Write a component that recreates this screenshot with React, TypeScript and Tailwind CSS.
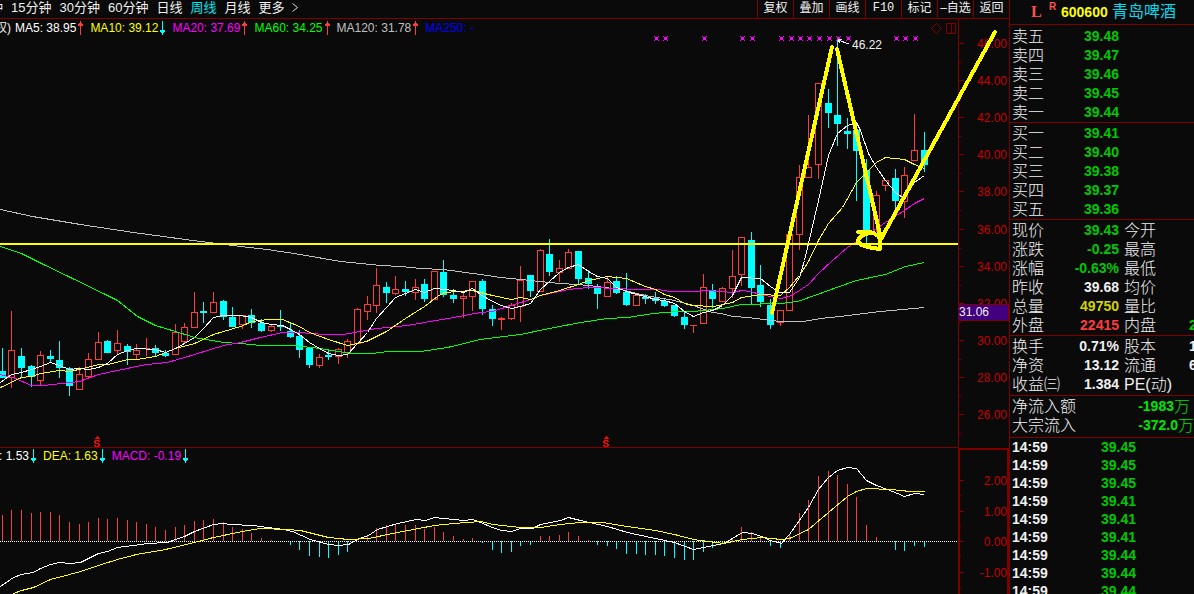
import clsx from 'clsx'

const UP = '#ff3c3c'
const DOWN = '#00ffff'
const AXIS = '#800000'
const LABEL = '#c80000'

const PERIODS = ['15分钟', '30分钟', '60分钟', '日线', '周线', '月线', '更多']
const TOOLS = ['复权', '叠加', '画线', 'F10', '标记', '–自选', '返回']

const MA_LEGEND = [
  { text: 'MA5: 38.95', color: 'text-white', up: true },
  { text: 'MA10: 39.12', color: 'text-[#ffff00]', up: false },
  { text: 'MA20: 37.69', color: 'text-[#ff00ff]', up: true },
  { text: 'MA60: 34.25', color: 'text-[#00ff00]', up: true },
  { text: 'MA120: 31.78', color: 'text-[#c0c0c0]', up: true },
]

// high, body top, body bottom, low, rising (1) or falling (0)
const CANDLES = [
  [348, 371, 378, 378, 0], [311, 350, 378, 388, 1], [348, 356, 368, 378, 0], [365, 366, 377, 387, 0],
  [351, 355, 381, 386, 1], [350, 356, 359, 362, 0], [341, 360, 368, 378, 0], [367, 368, 386, 396, 0],
  [367, 374, 390, 390, 1], [353, 359, 377, 378, 1], [332, 342, 360, 360, 1], [340, 341, 353, 353, 0],
  [330, 343, 351, 354, 1], [344, 346, 352, 365, 0], [344, 350, 355, 359, 1], [338, 348, 349, 356, 1],
  [345, 348, 353, 357, 0], [350, 353, 356, 357, 0], [324, 332, 355, 355, 1], [323, 327, 342, 343, 1],
  [292, 312, 328, 328, 1], [302, 311, 313, 323, 0], [292, 302, 313, 313, 1], [300, 301, 317, 320, 0],
  [307, 317, 327, 327, 0], [315, 315, 325, 329, 1], [309, 315, 323, 328, 0], [319, 323, 331, 332, 0],
  [325, 326, 331, 332, 1], [310, 325, 327, 331, 0], [323, 331, 337, 338, 0], [330, 336, 350, 358, 0],
  [347, 348, 365, 368, 0], [354, 357, 366, 368, 1], [349, 355, 357, 360, 0], [348, 349, 357, 364, 1],
  [339, 341, 353, 358, 1], [308, 309, 344, 344, 1], [296, 304, 312, 320, 1], [268, 285, 306, 313, 1],
  [282, 287, 293, 303, 0], [276, 289, 294, 295, 1], [281, 289, 292, 296, 0], [279, 287, 293, 300, 1],
  [279, 284, 299, 302, 0], [271, 271, 300, 300, 1], [260, 272, 295, 297, 0], [289, 295, 299, 303, 0],
  [293, 296, 299, 318, 1], [281, 281, 297, 311, 1], [279, 281, 309, 315, 0], [305, 309, 319, 326, 0],
  [317, 318, 320, 330, 1], [303, 305, 319, 320, 1], [266, 280, 307, 322, 1], [275, 275, 291, 297, 0],
  [249, 250, 292, 292, 1], [239, 254, 272, 276, 0], [260, 268, 273, 282, 1], [249, 252, 269, 269, 1],
  [251, 251, 279, 284, 0], [270, 278, 284, 289, 0], [284, 286, 294, 309, 0], [277, 282, 297, 297, 1],
  [276, 281, 293, 294, 0], [273, 292, 305, 306, 0], [295, 295, 306, 306, 1], [294, 297, 299, 304, 0],
  [292, 298, 301, 304, 0], [299, 301, 306, 307, 0], [305, 305, 316, 317, 0], [311, 317, 325, 329, 0],
  [325, 325, 326, 333, 1], [274, 287, 324, 324, 1], [284, 290, 299, 308, 0], [287, 288, 302, 302, 1],
  [250, 276, 289, 298, 1], [237, 237, 275, 286, 1], [232, 240, 288, 304, 0], [265, 285, 302, 307, 0],
  [299, 305, 325, 329, 0], [310, 310, 323, 326, 1], [234, 234, 311, 311, 1], [165, 177, 235, 250, 1],
  [115, 167, 178, 178, 1], [83, 83, 165, 179, 1], [89, 103, 113, 128, 0], [40, 115, 124, 146, 0],
  [118, 131, 134, 149, 0], [128, 130, 151, 201, 0], [159, 170, 235, 243, 0], [191, 195, 230, 232, 1],
  [180, 180, 186, 191, 1], [169, 178, 201, 210, 0], [167, 175, 202, 218, 1], [114, 150, 161, 161, 1],
  [132, 150, 165, 172, 0],
]

const MACD_ZERO = 541
const MACD_BARS = [
  515, 510, 510, 513, 512, 512, 515, 522, 524, 522, 518, 519, 518, 520, 522, 524, 527, 530, 527, 525,
  521, 520, 519, 522, 527, 529, 533, 538, 540, 541, 545, 550, 556, 557, 558, 555, 552, 541, 536, 528,
  525, 524, 525, 525, 529, 527, 532, 536, 539, 538, 543, 550, 553, 552, 546, 545, 536, 536, 535, 532,
  536, 540, 545, 546, 549, 554, 554, 555, 555, 556, 558, 560, 560, 552, 548, 543, 539, 527, 532, 537,
  546, 548, 534, 513, 500, 476, 471, 475, 484, 497, 525, 537, 541, 550, 551, 546, 547,
]

const MA_LINES = [
  {
    color: '#c0c0c0',
    points:
      '0,209 32,216 80,224 133,232 200,241 240,246 267,249 300,254 340,261 380,265 400,266 420,268 443,269 480,274 500,277 530,280 559,283 578,284 597,286 620,289 645,295 674,300 693,305 712,312 720,313 733,316 747,317 780,321 803,321 820,318 840,316 880,311 924,307',
  },
  {
    color: '#00ff00',
    points:
      '0,246 21,253 41,263 70,277 107,295 117,300 137,316 155,325 175,331 194,337 223,342 240,343 260,345 293,345 320,348 337,351 353,353 372,353 387,351 420,351 447,347 480,339 520,334 549,328 580,322 607,318 627,317 653,313 677,311 693,311 722,308 741,304 780,303 797,301 817,294 839,286 856,280 885,274 905,266 924,262',
  },
  {
    color: '#ff00ff',
    points:
      '0,374 15,378 31,385 43,385 79,381 98,374 117,370 146,364 167,362 184,357 194,354 223,345 240,342 260,337 282,332 299,332 323,334 343,334 376,328 407,325 424,322 453,317 480,312 492,311 511,305 530,299 540,295 568,289 588,287 620,288 630,289 657,289 670,291 692,291 707,290 720,291 733,292 741,290 750,291 760,294 780,298 789,296 799,290 808,284 817,274 832,260 847,247 856,241 872,231 885,222 904,210 914,203 924,198',
  },
  {
    color: '#ffff00',
    points:
      '0,387 21,377 31,376 40,373 59,370 69,371 83,368 98,364 108,364 127,359 136,359 155,356 175,348 194,343 213,334 240,326 252,321 268,319 282,319 299,326 309,332 328,339 347,345 366,341 376,336 386,331 405,318 424,306 437,296 444,292 472,290 480,292 492,295 511,299 520,297 530,299 540,295 559,290 578,284 588,280 607,276 626,278 645,286 655,289 664,294 674,297 684,303 692,305 713,306 732,302 741,297 760,294 780,295 789,287 799,275 808,261 818,240 828,223 842,207 856,182 868,170 876,162 885,157 904,159 914,164 924,168',
  },
  {
    color: '#ffffff',
    points:
      '0,382 11,374 21,372 31,369 40,366 50,362 59,365 69,369 79,368 88,369 98,367 107,363 117,354 127,350 136,348 155,349 165,352 175,348 184,343 194,337 203,328 213,317 222,315 240,315 251,317 261,322 271,324 282,325 290,329 299,334 309,342 319,348 328,353 338,355 347,354 357,343 367,332 376,318 386,307 395,297 405,293 415,289 424,292 434,288 444,289 453,290 463,292 472,288 480,294 492,301 501,305 511,308 520,306 530,303 540,289 549,281 559,272 568,267 578,264 588,271 597,276 607,278 616,287 626,291 636,294 645,296 655,299 664,300 674,303 684,311 693,316 703,312 712,310 722,305 732,295 741,277 760,278 770,286 779,292 789,292 799,277 804,260 818,200 828,155 837,133 847,125 856,122 860,130 868,153 876,167 885,180 895,192 902,197 914,182 924,175',
  },
]

const DIF =
  '0,586 13,577 21,574 33,572 40,568 50,564 59,562 69,563 80,562 88,558 98,553 107,551 117,547 133,545 147,543 167,542 175,539 184,536 194,531 213,524 223,523 230,524 253,525 267,527 283,529 292,531 310,539 328,544 338,545 348,544 357,539 368,535 377,529 397,523 416,519 425,520 434,517 463,520 472,519 480,522 492,527 501,530 511,531 520,528 532,528 540,524 550,522 560,520 568,517 580,520 607,526 627,532 636,534 674,542 693,549 703,547 723,543 732,538 742,532 752,533 761,536 770,540 781,543 789,534 808,507 818,489 828,477 837,470 847,467 856,468 866,480 876,485 887,489 897,493 904,496 914,493 924,494'
const DEA =
  '8,596 13,593 21,590 33,587 50,579 69,574 80,571 98,565 117,559 136,554 165,549 194,542 213,537 242,531 260,528 287,529 300,530 328,537 348,539 368,538 397,532 434,525 453,523 480,521 493,524 520,527 540,527 560,524 580,522 602,522 627,526 655,530 674,534 693,539 723,543 742,539 761,537 781,539 789,538 808,529 828,512 847,496 856,491 866,488 890,489 910,491 924,491'

const CROSSES = [656, 665, 704, 742, 752, 781, 791, 800, 809, 819, 829, 838, 848, 896, 905, 915]
const PRICE_LABELS = ['46.00', '44.00', '42.00', '40.00', '38.00', '36.00', '34.00', '32.00', '30.00', '28.00', '26.00']
const MACD_LABELS = ['2.00', '1.00', '0.00', '-1.00']

const SELLS = [['卖五', '39.48'], ['卖四', '39.47'], ['卖三', '39.46'], ['卖二', '39.45'], ['卖一', '39.44']]
const BUYS = [['买一', '39.41'], ['买二', '39.40'], ['买三', '39.38'], ['买四', '39.37'], ['买五', '39.36']]

const GREEN = 'text-[#00c800]'
const LIGHT = 'text-[#f0f0f0]'

const QUOTE = [
  ['现价', '39.43', GREEN, '今开', '', GREEN],
  ['涨跌', '-0.25', GREEN, '最高', '', GREEN],
  ['涨幅', '-0.63%', GREEN, '最低', '', GREEN],
  ['昨收', '39.68', LIGHT, '均价', '', GREEN],
  ['总量', '49750', 'text-[#d2d200]', '量比', '', LIGHT],
  ['外盘', '22415', 'text-[#ff3c3c]', '内盘', '2', GREEN],
]
const BASICS = [
  ['换手', '0.71%', LIGHT, '股本', '1', LIGHT],
  ['净资', '13.12', LIGHT, '流通', '6', LIGHT],
  ['收益㈢', '1.384', LIGHT, 'PE(动)', '', LIGHT],
]
const TICKS = ['39.45', '39.45', '39.45', '39.41', '39.41', '39.41', '39.44', '39.44', '39.44']

const barX = (i: number) => Math.floor(2.3 + 9.602 * i)

function Arrow({ up }: { up: boolean }) {
  return (
    <svg width="5" height="14" viewBox="0 0 5 14" shapeRendering="crispEdges" className="shrink-0">
      {up ? (
        <path d="M2 0h1v2h1v1h1v2H3v9H2V5H0V3h1V2h1z" fill={UP} />
      ) : (
        <path d="M2 0h1v9h2v2H4v1H3v2H2v-2H1v-1H0V9h2z" fill={DOWN} />
      )}
    </svg>
  )
}

function Candle({ index, data }: { index: number; data: number[] }) {
  const [high, top, bottom, low, rising] = data
  const x = barX(index)
  const color = rising ? UP : DOWN
  return (
    <g>
      {top > high && <rect x={x} y={high} width="1" height={top - high} fill={color} />}
      {low > bottom && <rect x={x} y={bottom} width="1" height={low - bottom} fill={color} />}
      {rising && bottom - top > 2 ? (
        <rect x={x - 2.5} y={top + 0.5} width="6" height={bottom - top - 1} fill="none" stroke={color} />
      ) : (
        <rect x={x - 3} y={top} width="7" height={bottom - top} fill={color} />
      )}
    </g>
  )
}

function DividendMark({ x }: { x: number }) {
  return (
    <g fill="#ff0000" transform={`translate(${x - 3} 436)`}>
      <path d="M3 0h1v1h1v1h-3v-1h1zM1 2h5v1h-5z" />
      <path d="M1 4h4v1h-4zM0 5h2v2h-2zM4 5h2v1h-2zM1 7h4v1h-4zM4 8h2v2h-2zM0 9h2v1h-2zM1 10h4v1h-4z" />
    </g>
  )
}

function PriceChart() {
  return (
    <svg viewBox="0 19 1009 429" className="block h-auto w-full" shapeRendering="crispEdges">
      {CANDLES.map((data, i) => (
        <Candle key={i} index={i} data={data} />
      ))}
      <g fill="none">
        {MA_LINES.map(line => (
          <polyline key={line.color} points={line.points} stroke={line.color} transform="translate(0.5 0.5)" />
        ))}
      </g>
      {CROSSES.map(x => (
        <path
          key={x}
          d={`M${x - 2} 36h1v1h-1zM${x + 2} 36h1v1h-1zM${x - 1} 37h3v3h-3zM${x - 2} 40h1v1h-1zM${x + 2} 40h1v1h-1z`}
          fill="#ff00ff"
        />
      ))}
      <DividendMark x={97} />
      <DividendMark x={606} />

      {/* Price axis */}
      <path d="M958.5 19V447M0 447.5H958" stroke={AXIS} fill="none" />
      {PRICE_LABELS.map((label, i) => {
        const y = Math.round(43 + 37.1 * i)
        return (
          <g key={label}>
            <path d={`M959 ${y + 0.5}h5M959 ${y + 19.5}h2`} stroke={AXIS} />
            <text x="1007" y={y + 5} fontSize="12" textAnchor="end" fill={LABEL}>{label}</text>
          </g>
        )
      })}
      <rect x="958.5" y="304.5" width="50" height="16" fill="#400080" stroke={AXIS} />
      <text x="959" y="316" fontSize="12" fill="#f0f0f0">31.06</text>

      {/* Corner controls */}
      <path d="M936.5 23.5l5 5-5 5-5-5zM946.5 23.5h9v10h-9zM951.5 23.5v10" fill="none" stroke={AXIS} />

      {/* Peak label */}
      <path d="M838 40l11 4M838 40l4-1M838 40l2 3" stroke="#f0f0f0" fill="none" />
      <text x="852" y="49" fontSize="12" fill="#f0f0f0">46.22</text>

      {/* Hand drawn trend lines */}
      <rect x="0" y="243" width="958" height="2" fill="#ffff00" />
      <g fill="none" stroke="#ffff00" strokeLinecap="round" strokeLinejoin="round">
        <path d="M772 313L832 47M837 49L881 239L995 32" strokeWidth="4" />
        <path
          d="M858 232C866 231 872 232 875 234C880 236 881 242 880 249C872 248 862 247 858 242C858 237 864 234 870 233"
          strokeWidth="4"
        />
      </g>
    </svg>
  )
}

function MacdChart() {
  return (
    <svg viewBox="0 448 1009 146" className="block h-auto w-full" shapeRendering="crispEdges">
      {MACD_BARS.map((y, i) => (
        <rect
          key={i}
          x={barX(i)}
          y={Math.min(y, MACD_ZERO)}
          width="1"
          height={Math.abs(y - MACD_ZERO)}
          fill={y < MACD_ZERO ? UP : DOWN}
        />
      ))}
      <path d="M0 541.5H958" stroke="#ffffff" strokeDasharray="1 1" />
      <g fill="none" transform="translate(0.5 0.5)">
        <polyline points={DIF} stroke="#ffffff" />
        <polyline points={DEA} stroke="#ffff00" />
      </g>
      <path d="M959 600V449H1008V600" fill="none" stroke={AXIS} strokeWidth="2" />
      {MACD_LABELS.map((label, i) => {
        const y = Math.round(480 + 30.6 * i)
        return (
          <g key={label}>
            <path d={`M960 ${y + 0.5}h4M960 ${y + 15.5}h1`} stroke={AXIS} />
            <text x="1007" y={y + 5} fontSize="12" textAnchor="end" fill={LABEL}>{label}</text>
          </g>
        )
      })}
    </svg>
  )
}

function OrderTable({ rows }: { rows: string[][] }) {
  return (
    <table className="w-[107px] table-fixed">
      <tbody>
        {rows.map(([name, price]) => (
          <tr key={name} className="h-[19px]">
            <th scope="row" className="p-0 text-left text-base/[19px] font-light text-[#f0f0f0]">{name}</th>
            <td className="p-0 text-right text-sm/[19px] font-bold text-[#00c800]">{price}</td>
          </tr>
        ))}
      </tbody>
    </table>
  )
}

function QuoteTable({ rows }: { rows: string[][] }) {
  return (
    <table className="w-full table-fixed whitespace-nowrap">
      <colgroup>
        <col className="w-12" />
        <col className="w-[59px]" />
        <col className="w-[70px]" />
        <col />
      </colgroup>
      <tbody>
        {rows.map(([name, value, color, name2, value2, color2]) => (
          <tr key={name} className="h-[19px]">
            <th scope="row" className="p-0 text-left text-base/[19px] font-light text-[#f0f0f0]">{name}</th>
            <td className={clsx('p-0 text-right text-sm/[19px] font-bold', color)}>{value}</td>
            <th scope="row" className="p-0 pl-[5px] text-left text-base/[19px] font-light text-[#f0f0f0]">{name2}</th>
            <td className={clsx('p-0 text-sm/[19px] font-bold', color2)}>{value2}</td>
          </tr>
        ))}
      </tbody>
    </table>
  )
}

export default function App() {
  return (
    <div className="flex h-screen overflow-hidden bg-[#0a0a0a] font-['Liberation_Sans','Noto_Sans_CJK_SC',sans-serif] text-[#f0f0f0]">
      <main className="min-w-0 flex-1">
        <header className="flex h-[19px] items-stretch border-b border-[#800000] text-[13px]/[15px] whitespace-nowrap">
          <nav className="flex flex-1 items-start gap-2">
            <button className="flex w-[3px] justify-end overflow-hidden">5分钟</button>
            {PERIODS.map(period => (
              <button key={period} className={clsx(period === '周线' && 'text-[#00e6f0]')}>
                {period}
              </button>
            ))}
            <svg width="6" height="15" viewBox="0 0 6 15" fill="none" stroke="#dcdcdc" aria-hidden="true">
              <path d="M0.5 3.5l5 4-5 4" />
            </svg>
          </nav>
          {TOOLS.map(tool => (
            <button
              key={tool}
              className={clsx(
                'flex w-9 items-center justify-center border-l border-[#800000] pb-0.5 text-[12px]/[15px]',
                tool === 'F10' && "font-['Liberation_Mono',monospace]"
              )}
            >
              {tool}
            </button>
          ))}
        </header>

        <section className="relative">
          <PriceChart />
          <div className="absolute top-0.5 left-0 flex text-[12px]/[14px] whitespace-nowrap">
            <span className="flex w-[15px] justify-end overflow-hidden pr-1">(前复权)</span>
            {MA_LEGEND.map(item => (
              <span key={item.text} className={clsx('mr-[7px] flex gap-0.5', item.color)}>
                {item.text}
                <Arrow up={item.up} />
              </span>
            ))}
            <span className="text-[#0000ff]">MA250: -</span>
          </div>
        </section>

        <section className="relative">
          <MacdChart />
          <div className="absolute top-px left-0 flex gap-[7px] text-[12px]/[14px] whitespace-nowrap">
            <span className="flex gap-0.5 text-white">
              <span className="flex w-[29px] justify-end overflow-hidden">DIF: 1.53</span>
              <Arrow up={false} />
            </span>
            <span className="flex gap-0.5 text-[#ffff00]">DEA: 1.63<Arrow up={false} /></span>
            <span className="flex gap-0.5 text-[#ff00ff]">MACD: -0.19<Arrow up={false} /></span>
          </div>
        </section>
      </main>

      <aside className="w-[185px] shrink-0 overflow-hidden border-l border-[#800000] [&>section]:border-b [&>section]:border-[#800000] [&>section]:pl-0.5">
        <h1 className="flex h-[25px] items-center border-b border-[#800000] pl-[21px] whitespace-nowrap">
          <span className="w-[18px] font-['Liberation_Serif',serif] text-base font-bold text-[#ff5050]">L</span>
          <sup className="w-3 text-[10px] font-bold text-[#ff5050]">R</sup>
          <span className="w-[51px] text-sm font-bold text-[#ffff00]">600600</span>
          <span className="text-base text-[#00dcf0]">青岛啤酒</span>
        </h1>
        <section className="pt-0.5">
          <OrderTable rows={SELLS} />
        </section>
        <section className="pt-px">
          <OrderTable rows={BUYS} />
        </section>
        <section className="pt-px">
          <QuoteTable rows={QUOTE} />
        </section>
        <section className="pt-px pb-px">
          <QuoteTable rows={BASICS} />
        </section>
        <section className="pt-px pb-0.5">
          <dl className="text-base/[19px] font-light whitespace-nowrap">
            <div className="flex h-[19px] justify-between pr-1">
              <dt>净流入额</dt>
              <dd className="flex text-[#00e600]"><span className="text-sm/[19px] font-bold">-1983</span>万</dd>
            </div>
            <div className="flex h-[19px]">
              <dt className="w-[131px]">大宗流入</dt>
              <dd className="flex text-[#00e600]"><span className="text-sm/[19px] font-bold">-372.0</span>万</dd>
            </div>
          </dl>
        </section>
        <table className="ml-0.5 w-[124px] text-sm/[18px] font-bold">
          <tbody>
            {TICKS.map((price, i) => (
              <tr key={i}>
                <td className="p-0 text-[#f0f0f0]">14:59</td>
                <td className="p-0 text-right text-[#00c800]">{price}</td>
              </tr>
            ))}
          </tbody>
        </table>
      </aside>
    </div>
  )
}
